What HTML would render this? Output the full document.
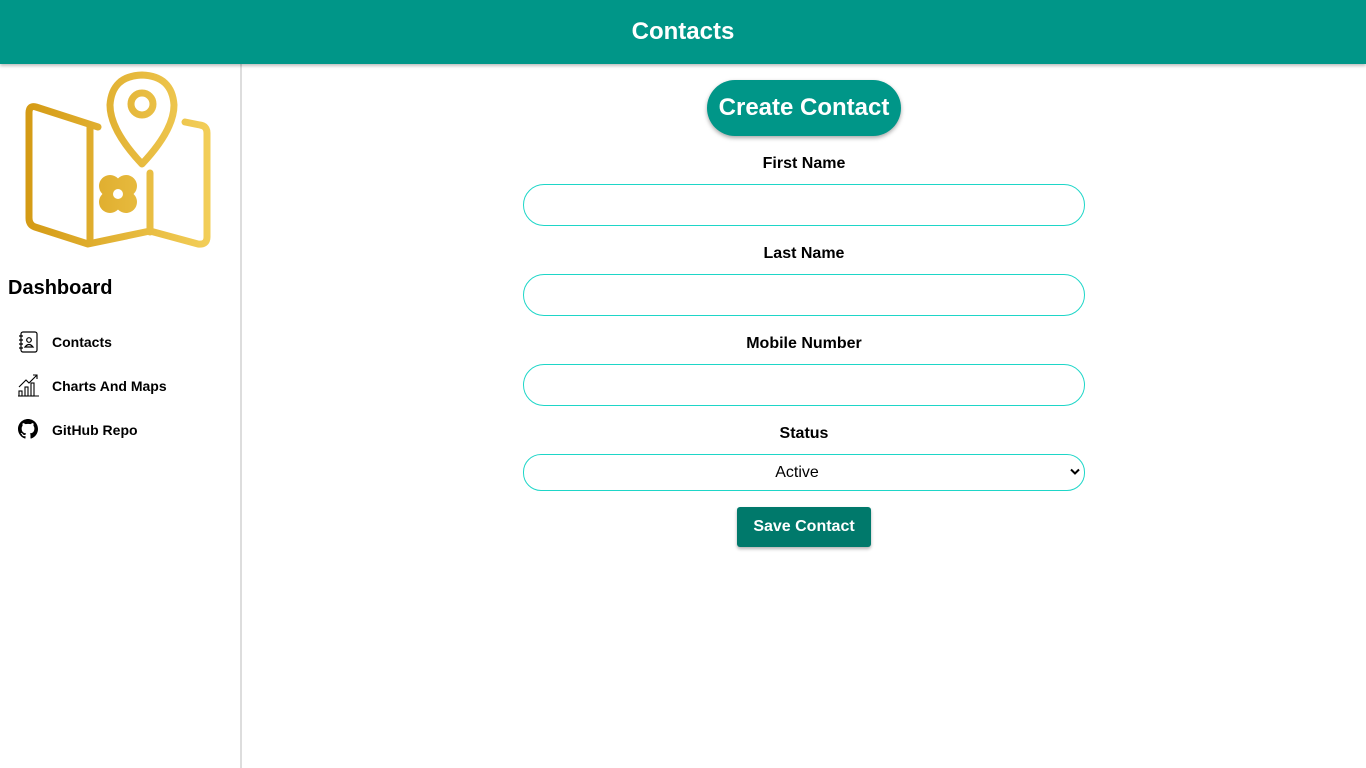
<!DOCTYPE html>
<html><head><style>
*{box-sizing:border-box;margin:0;padding:0}
body{width:1366px;height:768px;font-family:"Liberation Sans",Arial,sans-serif;background:#fff;position:relative;overflow:hidden}
.hdr{position:absolute;left:0;top:0;width:1366px;height:64px;background:#009688;box-shadow:0 2px 3px rgba(0,0,0,.25);color:#fff;font-weight:bold;font-size:24px;text-align:center;line-height:64px;z-index:2}
.side{position:absolute;left:0;top:64px;width:242px;height:704px;border-right:2px solid #ddd}
.dash{position:absolute;left:8px;top:213px;font-size:20px;font-weight:bold}
.nav{position:absolute;left:52px;font-size:14px;font-weight:bold}
.ic{position:absolute;left:16px}
.main{position:absolute;left:523px;top:0;width:562px}
.lbl{position:absolute;width:562px;text-align:center;font-weight:bold;font-size:16px}
.inp{position:absolute;left:0;width:562px;height:42px;border:1px solid #1ed6c8;border-radius:21px}
.cc{position:absolute;left:184px;top:80px;width:194px;height:56px;border-radius:28px;background:#009688;color:#fff;font-weight:bold;font-size:24px;text-align:center;line-height:56px;box-shadow:0 2px 4px rgba(0,0,0,.35)}
.sel{position:absolute;left:0;top:454px;width:562px;height:37px;border:1px solid #1ed6c8;border-radius:18px;font-size:16px;text-align:center;line-height:35px}
.save{position:absolute;left:214px;top:507px;width:134px;height:40px;background:#00796b;color:#fff;font-weight:bold;font-size:16px;text-align:center;line-height:40px;border-radius:3px;box-shadow:0 2px 3px rgba(0,0,0,.3)}
</style></head><body>
<div class="hdr">Contacts</div>
<div class="side">
<svg style="position:absolute;left:0;top:0" width="240" height="190" viewBox="0 64 240 190">
<defs><linearGradient id="g" gradientUnits="userSpaceOnUse" x1="25" y1="0" x2="212" y2="0"><stop offset="0" stop-color="#d49a14"/><stop offset="1" stop-color="#f3cf5a"/></linearGradient></defs>
<g fill="none" stroke="url(#g)" stroke-width="7" stroke-linejoin="round" stroke-linecap="round">
<path d="M98 127 L36 107 Q29 105 29 113 L29 218 Q29 225 35 227 L88 244 L150 231 L198 244 Q207 245 207 237 L207 133 Q207 126 200 125 L185 122"/>
<path d="M90 127 L90 242"/><path d="M150 173 L150 232"/>
<path d="M142 164 Q110 130 110 105 Q112 76 142 75 Q172 76 174 105 Q174 130 142 164 Z"/>
<circle cx="142" cy="104" r="11"/>
</g>
<g fill="url(#g)"><circle cx="110" cy="186" r="11"/><circle cx="126" cy="186" r="11"/><circle cx="110" cy="202" r="11"/><circle cx="126" cy="202" r="11"/></g>
<circle cx="118" cy="194" r="5" fill="#fff"/>
</svg>
<div class="dash">Dashboard</div>
<svg class="ic" style="top:266px" width="24" height="24" viewBox="0 0 24 24" fill="none" stroke="#000" stroke-width="1.2"><rect x="5" y="2" width="16" height="20" rx="2"/><circle cx="13" cy="10" r="2.3"/><path d="M9 17 Q13 12 17 17 Z"/><path d="M3 6h4M3 10h4M3 14h4M3 18h4"/></svg>
<div class="nav" style="top:270px">Contacts</div>
<svg class="ic" style="top:308px" width="24" height="26" viewBox="0 0 24 26" fill="none" stroke="#000" stroke-width="1.1"><path d="M2 24h21"/><rect x="3" y="19" width="3" height="5"/><rect x="9" y="15" width="3" height="9"/><rect x="15" y="11" width="3" height="13"/><path d="M3 15 L10 8 L13 11 L21 3 M17 3h4v4"/></svg>
<div class="nav" style="top:314px">Charts And Maps</div>
<svg class="ic" style="top:355px;left:18px" width="20" height="20" viewBox="0 0 16 16"><path fill="#000" d="M8 0C3.58 0 0 3.58 0 8c0 3.540 2.29 6.53 5.47 7.59.4.07.55-.17.55-.38 0-.19-.01-.82-.01-1.49-2.01.37-2.530-.49-2.69-.94-.09-.23-.48-.94-.82-1.130-.28-.15-.68-.52-.01-.53.63-.01 1.08.58 1.23.82.72 1.21 1.87.87 2.33.66.07-.52.28-.87.51-1.070-1.78-.2-3.640-.89-3.64-3.95 0-.87.31-1.59.82-2.15-.08-.2-.36-1.02.08-2.12 0 0 .67-.21 2.2.82.64-.18 1.32-.27 2-.27.68 0 1.36.09 2 .27 1.53-1.04 2.2-.82 2.2-.82.44 1.1.16 1.92.08 2.12.51.56.82 1.27.82 2.15 0 3.07-1.87 3.75-3.65 3.95.29.25.54.73.54 1.480 0 1.07-.01 1.93-.01 2.2 0 .21.15.46.55.38A8.013 8.013 0 0016 8c0-4.42-3.58-8-8-8z"/></svg>
<div class="nav" style="top:358px">GitHub Repo</div>
</div>
<div class="main">
<div class="cc">Create Contact</div>
<div class="lbl" style="top:155px">First Name</div>
<div class="inp" style="top:184px"></div>
<div class="lbl" style="top:245px">Last Name</div>
<div class="inp" style="top:274px"></div>
<div class="lbl" style="top:335px">Mobile Number</div>
<div class="inp" style="top:364px"></div>
<div class="lbl" style="top:425px">Status</div>
<div class="sel"><span style="margin-left:-14px">Active</span><svg style="position:absolute;right:4px;top:13px" width="10" height="8" viewBox="0 0 10 8"><path d="M1 1.5 L5 5.5 L9 1.5" fill="none" stroke="#000" stroke-width="2"/></svg></div>
<div class="save">Save Contact</div>
</div>
</body></html>
